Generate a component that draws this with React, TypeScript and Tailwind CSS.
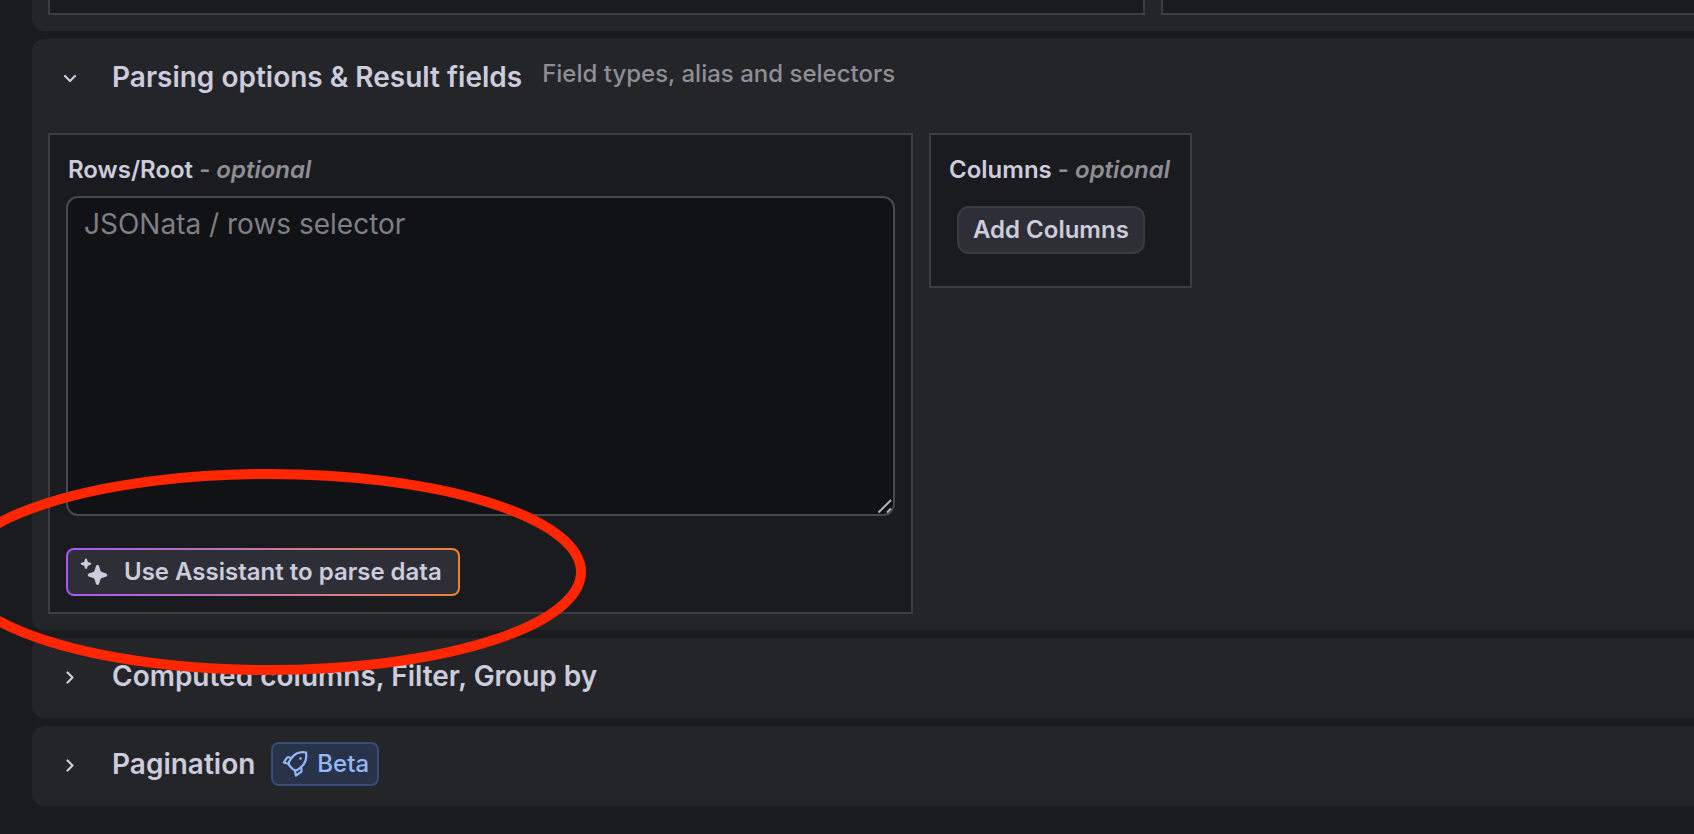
import { useState } from "react";
import type { ReactNode } from "react";

function ChevronIcon({ open }: { open: boolean }) {
  return (
    <svg
      viewBox="0 0 28 28"
      className="size-7"
      fill="none"
      stroke="currentColor"
      strokeWidth="2.2"
      strokeLinecap="round"
      strokeLinejoin="round"
      aria-hidden="true"
    >
      <path d={open ? "M9 13l5 5 5-5" : "M11.500 10.500l5 5-5 5"} />
    </svg>
  );
}

function SparkleIcon() {
  return (
    <svg viewBox="0 0 28 28" className="size-7" fill="currentColor" aria-hidden="true">
      <path d="M17.500 7c.8 0 1.400.5 1.600 1.200l1.300 4.300c.3.800.7 1.300 1.500 1.500l4.300 1.400c1.500.5 1.500 2.700 0 3.200l-4.300 1.300c-.8.300-1.200.7-1.500 1.500l-1.300 4.300c-.5 1.600-2.700 1.600-3.200 0l-1.300-4.300c-.3-.8-.7-1.200-1.500-1.500l-4.300-1.300c-1.500-.5-1.500-2.700 0-3.200l4.300-1.400c.8-.2 1.200-.7 1.500-1.500l1.300-4.300c.2-.7.800-1.200 1.600-1.200z" />
      <path d="M6 .5c.5 0 .9.300 1 .8l.9 2.600 2.600.9c1 .3 1 1.700 0 2l-2.600.9-.9 2.600c-.3 1-1.700 1-2 0l-.9-2.600-2.600-.9c-1-.3-1-1.700 0-2l2.600-.9.900-2.600c.1-.5.500-.8 1-.8z" />
    </svg>
  );
}

function RocketIcon() {
  return (
    <svg
      viewBox="0 0 28 28"
      className="size-7"
      fill="none"
      stroke="currentColor"
      strokeWidth="2.2"
      strokeLinecap="round"
      strokeLinejoin="round"
      aria-hidden="true"
    >
      <path d="M25 2.500C19.500 1.500 14 3.500 10.500 8l-2 3c-1.200 2-.8 3.800.5 5.200l3 3c1.400 1.300 3.200 1.500 5 .3l3-2.300C24.500 13.500 26 8 25 2.500z" />
      <path d="M10 8 7.500 7.300c-.8-.2-1.400.1-1.900.8L2.800 12.500 8 14" />
      <path d="m20 17.500.6 2.700c.2.800-.1 1.400-.8 1.900L15 25.700 13.800 20" />
      <circle cx="19.500" cy="8.500" r="1.300" fill="currentColor" stroke="none" />
    </svg>
  );
}

type SectionProps = {
  title: string;
  hint?: string;
  badge?: ReactNode;
  defaultOpen?: boolean;
  children?: ReactNode;
};

function Section({ title, hint, badge, defaultOpen = false, children }: SectionProps) {
  const [isOpen, setIsOpen] = useState(defaultOpen);

  return (
    <section className="rounded-l-xl bg-[#242529]">
      <div className="flex h-20 items-center gap-4 pl-4">
        <h2 className="pb-1">
          <button
            type="button"
            aria-expanded={isOpen}
            onClick={() => setIsOpen((value) => !value)}
            className="flex items-center gap-7 pl-2 text-[28px] leading-8 font-semibold"
          >
            <ChevronIcon open={isOpen} />
            {title}
          </button>
        </h2>
        {hint && <p className="pb-[10px] pl-1 text-2xl font-medium text-[#8e8e96]">{hint}</p>}
        {badge}
      </div>
      {isOpen && children}
    </section>
  );
}

function Optional() {
  return (
    <span className="text-[#8e8e93]">
      - <em>optional</em>
    </span>
  );
}

export default function App() {
  return (
    <main className="relative min-h-screen overflow-hidden bg-[#1a1b1f] pl-8 font-['Inter',sans-serif] text-[#ccccdc]">
      <div className="flex flex-col gap-2">
        <section className="flex gap-4 rounded-bl-xl bg-[#242529] pb-4 pl-4">
          <div className="h-[15px] w-2/3 shrink-0 border-2 border-t-0 border-[#3c3d42] bg-[#1a1b1f]" />
          <div className="h-[15px] flex-1 border-b-2 border-l-2 border-[#3c3d42] bg-[#1a1b1f]" />
        </section>

        <Section
          title="Parsing options & Result fields"
          hint="Field types, alias and selectors"
          defaultOpen
        >
          <div className="flex items-start gap-4 px-4 pt-[14px] pb-4">
            <div className="border-2 border-[#3c3d42] bg-[#1a1b1f] p-4">
              <label htmlFor="root-selector" className="block pt-[3px] pl-[2px] text-2xl leading-8 font-semibold">
                Rows/Root <Optional />
              </label>
              <div className="relative mt-[10px]">
                <textarea
                  id="root-selector"
                  placeholder="JSONata / rows selector"
                  className="block h-80 w-[829px] max-w-full resize-none rounded-xl border-2 border-[#48494d] bg-[#111216] px-4 py-2 text-[28px] leading-9 outline-none placeholder:text-[#7f7f84]"
                />
                <svg
                  viewBox="0 0 16 16"
                  className="pointer-events-none absolute right-[2px] bottom-[2px] size-4"
                  stroke="#b0b0b4"
                  strokeWidth="2"
                  aria-hidden="true"
                >
                  <path d="M1.500 14.500 14 2M10 14.500 14 10.500" />
                </svg>
              </div>
              <div className="mt-8 inline-flex rounded-lg bg-linear-to-r from-[#a855f7] to-[#f08030] p-[2px]">
                <button
                  type="button"
                  className="flex h-11 items-center gap-4 rounded-md bg-[#2e2e36] pr-4 pl-3 text-2xl font-semibold"
                >
                  <SparkleIcon />
                  Use Assistant to parse data
                </button>
              </div>
            </div>

            <div className="border-2 border-[#3c3d42] bg-[#1a1b1f] pt-4 pr-5 pb-8 pl-4">
              <h3 className="pt-[3px] pl-[2px] text-2xl leading-8 font-semibold">
                Columns <Optional />
              </h3>
              <button
                type="button"
                className="mt-5 ml-[10px] h-12 rounded-xl border-2 border-[#3a3b40] bg-[#2e2e36] px-[14px] text-2xl font-semibold"
              >
                Add Columns
              </button>
            </div>
          </div>
        </Section>

        <Section title="Computed columns, Filter, Group by" />

        <Section
          title="Pagination"
          badge={
            <span className="mb-1 flex h-11 items-center gap-2 rounded-lg border-2 border-[#384c78] bg-[#28334a] px-2 text-2xl font-medium text-[#94b8fa]">
              <RocketIcon />
              Beta
            </span>
          }
        />
      </div>

      {/* marker circle round the assistant button */}
      <svg
        viewBox="0 0 600 220"
        className="pointer-events-none absolute top-[462px] left-0 h-[220px] w-[600px]"
        fill="none"
        stroke="#ff2600"
        strokeWidth="10"
        aria-hidden="true"
      >
        <ellipse cx="269" cy="110" rx="312" ry="98" />
      </svg>
    </main>
  );
}
